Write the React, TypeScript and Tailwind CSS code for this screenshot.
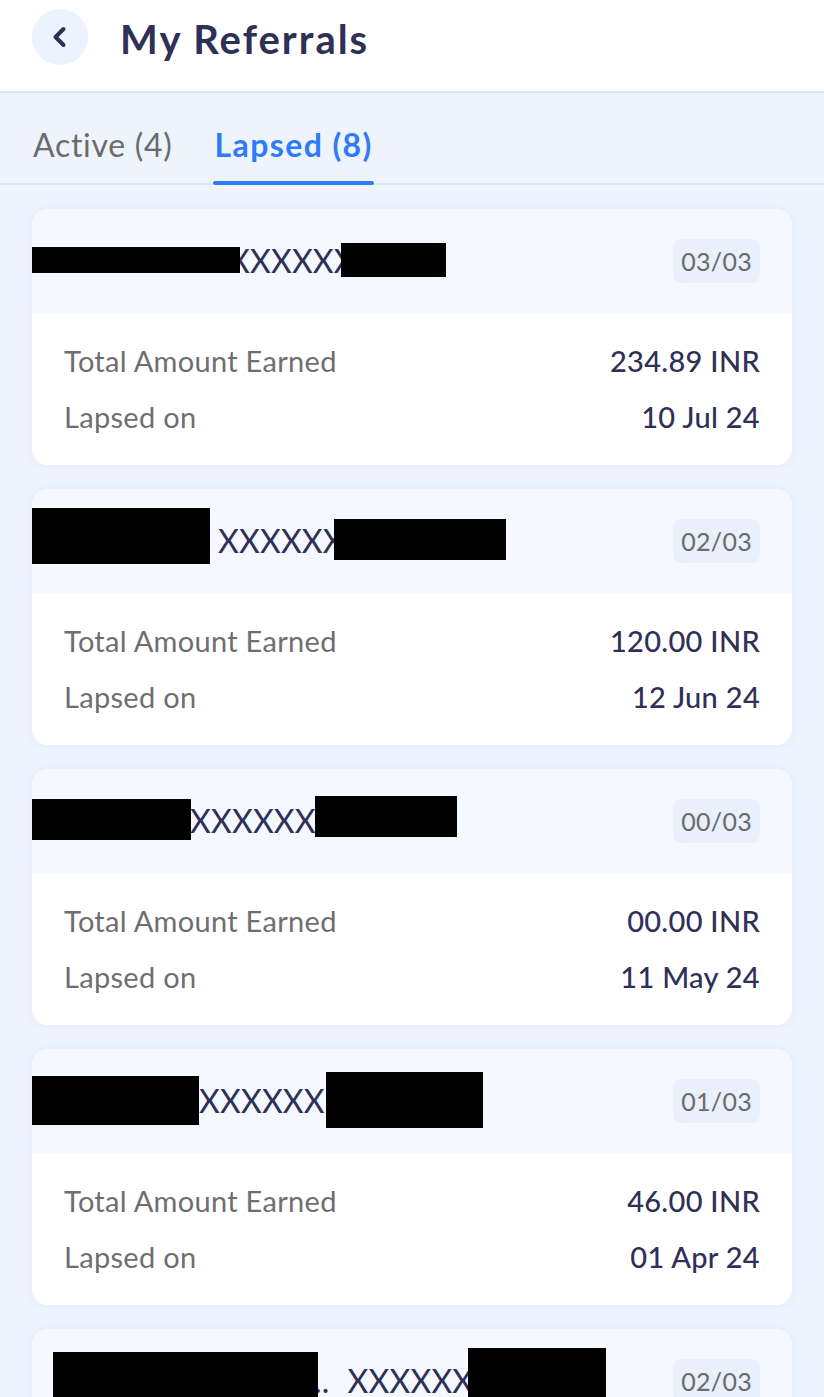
import React from "react";

type Box = { l: number; t: number; w: number; h: number };
type Card = {
  pre?: string;
  text: string;
  textX: number;
  b1: Box;
  b2: Box;
  badge: string;
  amount: string;
  date: string;
};

const cards: Card[] = [
  {
    text: "XXXXXX",
    textX: 197,
    b1: { l: -1, t: 38, w: 209, h: 26 },
    b2: { l: 309, t: 34, w: 105, h: 34 },
    badge: "03/03",
    amount: "234.89 INR",
    date: "10 Jul 24",
  },
  {
    text: "XXXXXX",
    textX: 186,
    b1: { l: -5, t: 19, w: 183, h: 56 },
    b2: { l: 302, t: 30, w: 172, h: 41 },
    badge: "02/03",
    amount: "120.00 INR",
    date: "12 Jun 24",
  },
  {
    text: "XXXXXX",
    textX: 158,
    b1: { l: -5, t: 30, w: 164, h: 41 },
    b2: { l: 283, t: 27, w: 142, h: 41 },
    badge: "00/03",
    amount: "00.00 INR",
    date: "11 May 24",
  },
  {
    text: "XXXXXX",
    textX: 167,
    b1: { l: -1, t: 27, w: 168, h: 49 },
    b2: { l: 294, t: 23, w: 157, h: 56 },
    badge: "01/03",
    amount: "46.00 INR",
    date: "01 Apr 24",
  },
  {
    pre: "..",
    text: "XXXXXX",
    textX: 282,
    b1: { l: 21, t: 23, w: 265, h: 70 },
    b2: { l: 436, t: 19, w: 138, h: 74 },
    badge: "02/03",
    amount: "46.00 INR",
    date: "01 Mar 24",
  },
];

function ReferralCard({ c }: { c: Card }) {
  return (
    <div className="rounded-2xl overflow-hidden bg-white shadow-[0_0_14px_rgba(120,150,210,0.10)]">
      <div className="relative h-[104px] bg-[#f5f9ff] flex items-center justify-between pr-8">
        <span
          className="text-[32px] text-[#2f3057] leading-none tracking-[0.2px] flex items-baseline"
          style={{ marginLeft: c.textX }}
        >
          {c.pre ? <span className="mr-[18px]">{c.pre}</span> : null}
          <span>{c.text}</span>
        </span>
        <span className="h-[44px] px-[8px] rounded-lg bg-[#eaeffc] text-[#6b6b6b] text-[25px] leading-none flex items-center tracking-[0.3px]">
          {c.badge}
        </span>
        <div
          className="absolute bg-black"
          style={{ left: c.b1.l, top: c.b1.t, width: c.b1.w, height: c.b1.h }}
        />
        <div
          className="absolute bg-black"
          style={{ left: c.b2.l, top: c.b2.t, width: c.b2.w, height: c.b2.h }}
        />
      </div>
      <div className="bg-white px-8 pt-[28px] pb-[28px] flex flex-col gap-[16px]">
        <div className="flex items-center justify-between h-[40px]">
          <span className="text-[29px] text-[#6e6e6e] tracking-[0.3px]">Total Amount Earned</span>
          <span className="text-[29px] text-[#2f3057] font-medium tracking-[0.3px]">{c.amount}</span>
        </div>
        <div className="flex items-center justify-between h-[40px]">
          <span className="text-[29px] text-[#6e6e6e] tracking-[0.3px]">Lapsed on</span>
          <span className="text-[29px] text-[#2f3057] font-medium tracking-[0.3px]">{c.date}</span>
        </div>
      </div>
    </div>
  );
}

export default function App() {
  return (
    <div
      className="w-[824px] h-[1397px] overflow-hidden bg-[#edf4fe]"
      style={{ fontFamily: "Lato, 'Noto Sans', sans-serif" }}
    >
      <div className="h-[93px] bg-white border-b-2 border-[#d8e7fa] flex items-start pt-[9px] pl-8 gap-[32px]">
        <div className="w-[56px] h-[56px] rounded-full bg-[#ebf3fe] flex items-center justify-center">
          <svg width="20" height="22" viewBox="0 0 20 22" fill="none">
            <polyline
              points="13.5,3 5.5,11 13.5,19"
              stroke="#2f3057"
              strokeWidth="4"
              strokeLinecap="round"
              strokeLinejoin="round"
            />
          </svg>
        </div>
        <h1 className="text-[40px] font-bold text-[#2f3057] leading-[60px] tracking-[2px]">
          My Referrals
        </h1>
      </div>
      <div className="h-[92px] border-b-2 border-[#d9e8fb] flex items-stretch pl-[33px] gap-[42px]">
        <div className="flex items-center pt-[14px]">
          <span className="text-[32px] text-[#6b6b6b] leading-none tracking-[0.7px]">Active (4)</span>
        </div>
        <div className="relative flex items-center pt-[14px]">
          <span className="text-[32px] text-[#2f7bf5] font-bold leading-none tracking-[1.4px]">
            Lapsed (8)
          </span>
          <span className="absolute left-[-1px] right-[-1px] bottom-[-2px] h-[4px] rounded-full bg-[#2f7bf5]" />
        </div>
      </div>
      <div className="px-8 pt-[24px] flex flex-col gap-[24px]">
        {cards.map((c, i) => (
          <ReferralCard key={i} c={c} />
        ))}
      </div>
    </div>
  );
}
